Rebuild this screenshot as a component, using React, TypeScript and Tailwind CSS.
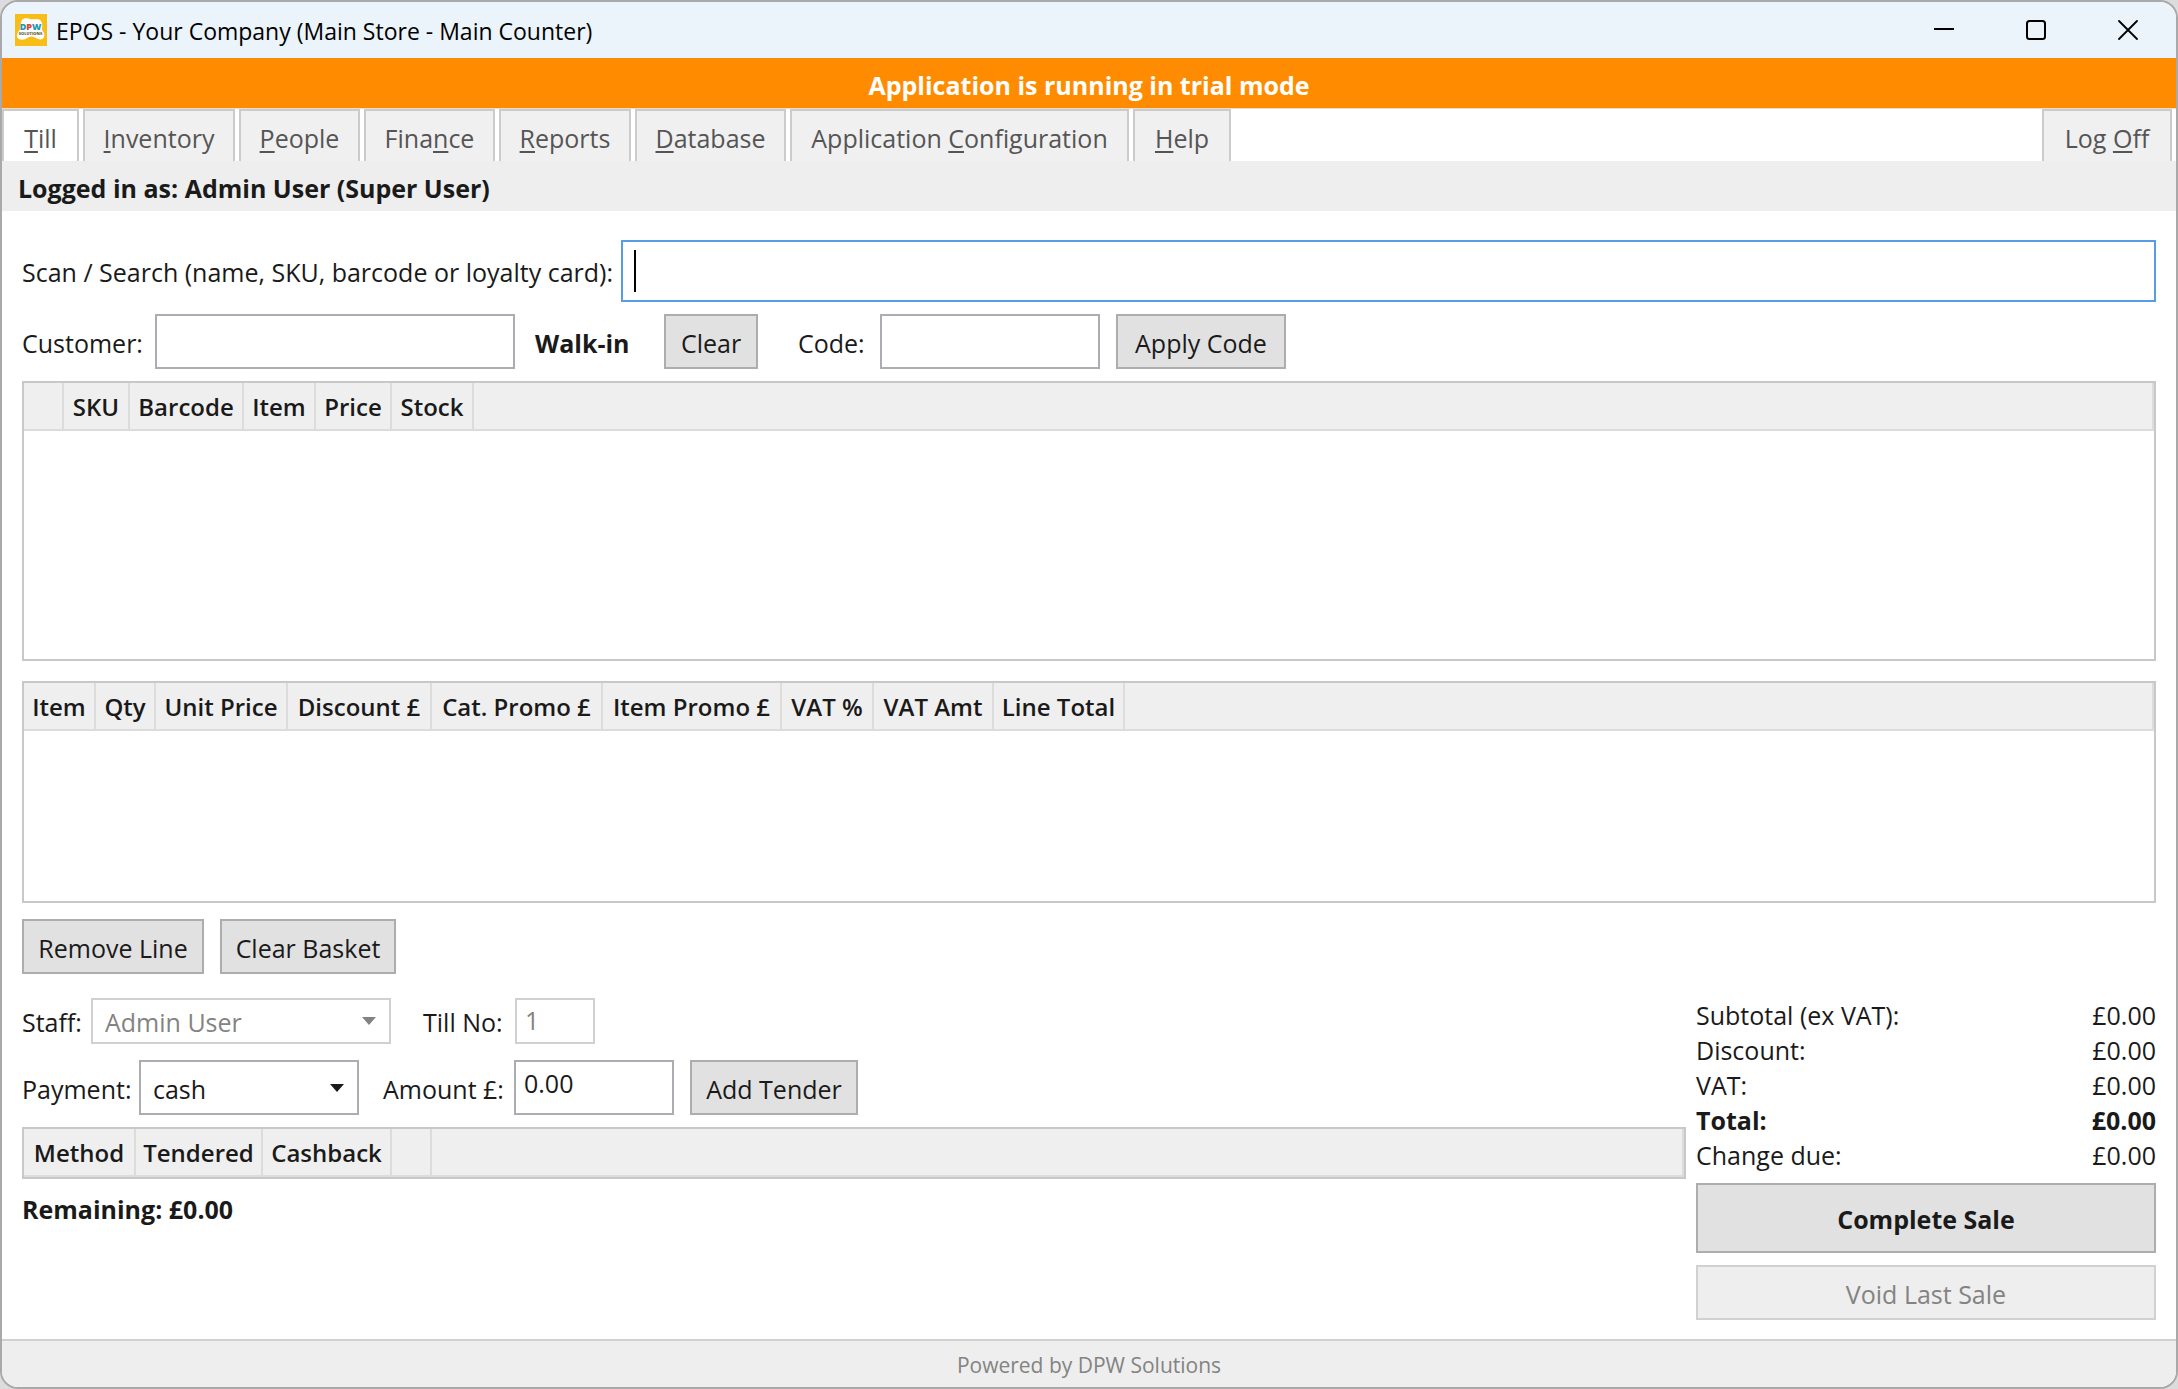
import type { ReactNode } from "react";

const FIELD = "border-2 border-[#abadb3] bg-white px-2 text-[#1a1a1a] outline-none";
const LABEL = "shrink-0 pt-0.5 whitespace-nowrap";
const BUTTON = "h-[55px] shrink-0 border-2 border-[#adadad] bg-[#e1e1e1] pt-0.5 text-center whitespace-nowrap";

type Column = { label: string; width: string };

const productColumns: Column[] = [
  { label: "", width: "w-10" },
  { label: "SKU", width: "w-[66px]" },
  { label: "Barcode", width: "w-[114px]" },
  { label: "Item", width: "w-[72px]" },
  { label: "Price", width: "w-[76px]" },
  { label: "Stock", width: "w-[82px]" },
];

const basketColumns: Column[] = [
  { label: "Item", width: "w-[72px]" },
  { label: "Qty", width: "w-[60px]" },
  { label: "Unit Price", width: "w-[132px]" },
  { label: "Discount £", width: "w-[144px]" },
  { label: "Cat. Promo £", width: "w-[171px]" },
  { label: "Item Promo £", width: "w-[179px]" },
  { label: "VAT %", width: "w-[92px]" },
  { label: "VAT Amt", width: "w-[120px]" },
  { label: "Line Total", width: "w-[131px]" },
];

const tenderColumns: Column[] = [
  { label: "Method", width: "w-[112px]" },
  { label: "Tendered", width: "w-[127px]" },
  { label: "Cashback", width: "w-[129px]" },
  { label: "", width: "w-10" },
];

const menu = [
  { before: "", key: "T", after: "ill", width: "w-[77px]" },
  { before: "", key: "I", after: "nventory", width: "w-[152px]" },
  { before: "", key: "P", after: "eople", width: "w-[121px]" },
  { before: "Fina", key: "n", after: "ce", width: "w-[131px]" },
  { before: "", key: "R", after: "eports", width: "w-[132px]" },
  { before: "", key: "D", after: "atabase", width: "w-[151px]" },
  { before: "Application ", key: "C", after: "onfiguration", width: "w-[339px]" },
  { before: "", key: "H", after: "elp", width: "w-[98px]" },
];

const totals = [
  { label: "Subtotal (ex VAT):", value: "£0.00", bold: false },
  { label: "Discount:", value: "£0.00", bold: false },
  { label: "VAT:", value: "£0.00", bold: false },
  { label: "Total:", value: "£0.00", bold: true },
  { label: "Change due:", value: "£0.00", bold: false },
];

function Accelerator({ children }: { children: ReactNode }) {
  return <span className="underline decoration-2 underline-offset-[3px]">{children}</span>;
}

function DataGrid({ name, columns, height }: { name: string; columns: Column[]; height: string }) {
  return (
    <div className={`${height} shrink-0 border-2 border-[#c8c8c8] bg-white`}>
      <table aria-label={name} className="w-full table-fixed border-separate border-spacing-0">
        <thead>
          <tr className="h-12 bg-[#efefef] text-[24px]">
            {columns.map((c, i) => (
              <th
                key={i}
                scope="col"
                className={`${c.width} border-r-2 border-b-2 border-[#dcdcdc] p-0 pt-0.5 text-center font-semibold whitespace-nowrap`}
              >
                {c.label}
              </th>
            ))}
            <th className="border-r-2 border-b-2 border-[#dcdcdc] p-0" />
          </tr>
        </thead>
      </table>
    </div>
  );
}

function Dropdown({ id, value, width, height, disabled }: { id: string; value: string; width: string; height: string; disabled?: boolean }) {
  return (
    <div className={`relative ${width} ${height} shrink-0`}>
      <select
        id={id}
        disabled={disabled}
        className={`h-full w-full appearance-none border-2 bg-white px-3 pt-0.5 opacity-100 outline-none ${
          disabled ? "border-[#d0d0d4] text-[#838383]" : "border-[#abadb3] text-[#1a1a1a]"
        }`}
      >
        <option>{value}</option>
      </select>
      <svg
        className={`pointer-events-none absolute top-1/2 right-[15px] -translate-y-1/2 ${disabled ? "text-[#838383]" : "text-[#1a1a1a]"}`}
        width="14"
        height="8"
        viewBox="0 0 14 8"
        aria-hidden="true"
      >
        <path d="M0 0h14L7 8z" fill="currentColor" />
      </svg>
    </div>
  );
}

function AppLogo() {
  return (
    <svg className="shrink-0" width="32" height="32" viewBox="0 0 32 32" aria-hidden="true">
      <rect width="32" height="32" fill="#f8bd17" />
      <path
        d="M7 6c1-2 5-2 8-1 4 1 9-1 11 2 2 3 1 6 1 9 2 2 3 5 2 7-1 3-5 3-8 1-3-2-6-2-9 0-2 2-6 2-8 1-3-2-2-5-1-7 1-1 2-2 2-4 0-3 1-6 2-8z"
        fill="#fff"
      />
      <text x="15.500" y="16" textAnchor="middle" fontFamily="Open Sans, sans-serif" fontSize="9" fontWeight="800" fill="#2796b4">
        D<tspan fill="#d9452f">P</tspan>W
      </text>
      <text x="15.500" y="21" textAnchor="middle" fontFamily="Open Sans, sans-serif" fontSize="4" fontWeight="800" fill="#6b6340">
        SOLUTIONS
      </text>
    </svg>
  );
}

function TitleBar() {
  return (
    <header className="flex h-14 shrink-0 items-center bg-[#ebf4fa] pr-0.5 pl-[13px] text-black">
      <AppLogo />
      <h1 className="ml-[9px] flex-1 pt-0.5 text-[23px] whitespace-nowrap">EPOS - Your Company (Main Store - Main Counter)</h1>
      <button aria-label="Minimize" className="flex h-full w-[92px] items-center justify-center">
        <svg width="20" height="20" viewBox="0 0 20 20" stroke="currentColor" strokeWidth="2">
          <path d="M0 9h20" />
        </svg>
      </button>
      <button aria-label="Maximize" className="flex h-full w-[92px] items-center justify-center">
        <svg width="20" height="20" viewBox="0 0 20 20" fill="none" stroke="currentColor" strokeWidth="2">
          <rect x="1" y="1" width="18" height="18" rx="2.500" />
        </svg>
      </button>
      <button aria-label="Close" className="flex h-full w-[92px] items-center justify-center">
        <svg width="20" height="20" viewBox="0 0 20 20" stroke="currentColor" strokeWidth="1.800" strokeLinecap="round">
          <path d="M1 1l18 18M19 1L1 19" />
        </svg>
      </button>
    </header>
  );
}

function MenuBar() {
  return (
    <nav className="flex h-[53px] shrink-0 gap-1 border-t border-[#e8dccb] bg-white pr-1 text-[#555]">
      {menu.map((m, i) => (
        <button
          key={m.key}
          className={`${m.width} border-x-2 border-t-2 border-[#cbcbcb] pt-[3px] text-center whitespace-nowrap ${i === 0 ? "bg-white" : "bg-[#f0f0f0]"}`}
        >
          {m.before}
          <Accelerator>{m.key}</Accelerator>
          {m.after}
        </button>
      ))}
      <button className="ml-auto w-[130px] border-x-2 border-t-2 border-[#cbcbcb] bg-[#f0f0f0] pt-[3px] text-center whitespace-nowrap">
        Log <Accelerator>O</Accelerator>ff
      </button>
    </nav>
  );
}

function TenderPanel() {
  return (
    <section className="flex min-w-0 flex-1 flex-col">
      <div className="flex h-[46px] items-center">
        <label htmlFor="staff" className={`${LABEL} w-[69px]`}>Staff:</label>
        <Dropdown id="staff" value="Admin User" width="w-[300px]" height="h-[46px]" disabled />
        <label htmlFor="till" className={`${LABEL} ml-8 w-[92px]`}>Till No:</label>
        <input id="till" defaultValue="1" disabled className="h-[46px] w-20 border-2 border-[#d0d0d4] bg-white px-2 pb-0.5 text-[#838383]" />
      </div>
      <div className="mt-4 flex h-[55px] items-center">
        <label htmlFor="payment" className={`${LABEL} w-[117px]`}>Payment:</label>
        <Dropdown id="payment" value="cash" width="w-[220px]" height="h-[55px]" />
        <label htmlFor="amount" className={`${LABEL} ml-6 w-[131px]`}>Amount £:</label>
        <input id="amount" defaultValue="0.00" className={`${FIELD} h-[55px] w-40 pb-2.5`} />
        <button className={`${BUTTON} ml-4 w-[168px]`}>Add Tender</button>
      </div>
      <div className="mt-3">
        <DataGrid name="Tenders" columns={tenderColumns} height="h-[52px]" />
      </div>
      <p className="mt-3.5 font-bold">Remaining: £0.00</p>
    </section>
  );
}

function TotalsPanel() {
  return (
    <section className="flex w-[460px] shrink-0 flex-col">
      <dl>
        {totals.map((t) => (
          <div key={t.label} className={`flex justify-between leading-[35px] ${t.bold ? "font-bold" : ""}`}>
            <dt>{t.label}</dt>
            <dd>{t.value}</dd>
          </div>
        ))}
      </dl>
      <button className="mt-2.5 h-[70px] border-2 border-[#adadad] bg-[#e1e1e1] pt-0.5 font-bold">Complete Sale</button>
      <button disabled className="mt-3 h-[55px] border-2 border-[#d1d1d1] bg-[#eee] pt-0.5 text-[#838383]">
        Void Last Sale
      </button>
    </section>
  );
}

export default function App() {
  return (
    <div className="h-screen bg-[#dcdcdc] font-['Open_Sans',sans-serif] text-[25px] leading-8 text-[#1a1a1a]">
      <div className="flex h-full flex-col overflow-hidden rounded-[18px] border-2 border-[#a9a9a9] bg-white">
        <TitleBar />
        <div className="flex h-[50px] shrink-0 items-center justify-center bg-[#ff8c00] pt-1 font-bold text-white">
          Application is running in trial mode
        </div>
        <MenuBar />
        <div className="flex h-[50px] shrink-0 items-center bg-[#eee] px-4 pt-[3px] font-bold">
          Logged in as: Admin User (Super User)
        </div>

        <main className="flex flex-1 flex-col px-5 pt-[29px]">
          <div className="flex items-center">
            <label htmlFor="search" className={`${LABEL} w-[599px]`}>
              Scan / Search (name, SKU, barcode or loyalty card):
            </label>
            <div className="relative flex-1">
              <input id="search" className="block h-[62px] w-full border-2 border-[#569de5] bg-white px-3 outline-none" />
              <span className="pointer-events-none absolute top-[10px] left-[13px] h-[42px] w-0.5 bg-black" />
            </div>
          </div>

          <div className="mt-3 flex items-center">
            <label htmlFor="customer" className={`${LABEL} w-[133px]`}>Customer:</label>
            <input id="customer" className={`${FIELD} h-[55px] w-[360px]`} />
            <span className={`${LABEL} ml-5 w-[129px] font-bold`}>Walk-in</span>
            <button className={`${BUTTON} w-[94px]`}>Clear</button>
            <label htmlFor="code" className={`${LABEL} ml-10 w-[82px]`}>Code:</label>
            <input id="code" className={`${FIELD} h-[55px] w-[220px]`} />
            <button className={`${BUTTON} ml-4 w-[170px]`}>Apply Code</button>
          </div>

          <div className="mt-3 flex flex-col gap-5">
            <DataGrid name="Products" columns={productColumns} height="h-[280px]" />
            <DataGrid name="Basket" columns={basketColumns} height="h-[222px]" />
          </div>

          <div className="mt-4 flex gap-4">
            <button className={`${BUTTON} w-[182px]`}>Remove Line</button>
            <button className={`${BUTTON} w-[176px]`}>Clear Basket</button>
          </div>

          <div className="mt-6 flex gap-[10px]">
            <TenderPanel />
            <TotalsPanel />
          </div>
        </main>

        <footer className="flex h-[48px] shrink-0 items-center justify-center border-t-2 border-[#d0d0d0] bg-[#eee] pt-0.5 text-[21px] text-[#838383]">
          Powered by DPW Solutions
        </footer>
      </div>
    </div>
  );
}
